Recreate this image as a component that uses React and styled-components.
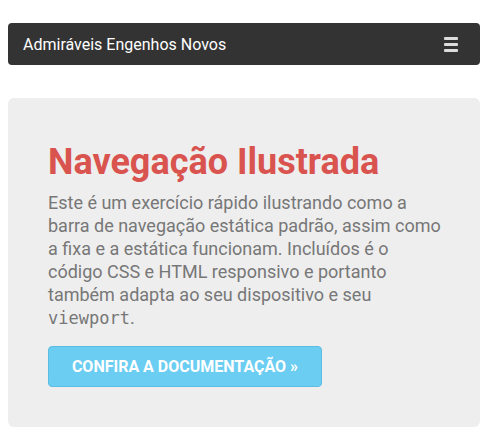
import React from "react";
import styled, { createGlobalStyle } from "styled-components";

const GlobalStyle = createGlobalStyle`
  body {
    margin: 0;
    background: #fff;
    font-family: Roboto, "Liberation Sans", sans-serif;
  }
`;

const Page = styled.div`
  padding: 23px 11px 0 8px;
`;

const Navbar = styled.nav`
  height: 42px;
  background: #333333;
  border-radius: 4px;
  display: flex;
  align-items: center;
  justify-content: space-between;
  padding: 0 22px 0 15px;
  box-sizing: border-box;
`;

const Brand = styled.span`
  color: #fff;
  font-size: 16px;
`;

const Toggle = styled.button`
  background: none;
  border: 0;
  padding: 0;
  display: flex;
  flex-direction: column;
  gap: 3px;
  cursor: pointer;
`;

const Bar = styled.span`
  display: block;
  width: 14px;
  height: 3px;
  border-radius: 1px;
  background: #dcdcdc;
`;

const Jumbotron = styled.section`
  margin-top: 33px;
  background: #eeeeee;
  border-radius: 6px;
  padding: 42px 35px 40px 40px;
  height: 329px;
  box-sizing: border-box;
`;

const Title = styled.h1`
  margin: 0 0 7px;
  font-size: 36px;
  line-height: 44px;
  font-weight: 700;
  color: #d9534f;
`;

const Lead = styled.p`
  margin: 0 0 17px;
  font-size: 18px;
  line-height: 23px;
  color: #777;
  code {
    font-family: "DejaVu Sans Mono", "Liberation Mono", monospace;
    font-size: 17px;
    line-height: 1;
    color: #777;
  }
`;

const Button = styled.a`
  display: inline-flex;
  align-items: center;
  justify-content: center;
  width: 274px;
  height: 41px;
  box-sizing: border-box;
  background: #6bcdf2;
  border: 1px solid #5bbde2;
  border-radius: 4px;
  color: #fff;
  font-weight: 700;
  font-size: 16px;
  text-transform: uppercase;
  text-decoration: none;
`;

export default function App() {
  return (
    <>
      <GlobalStyle />
      <Page>
        <Navbar>
          <Brand>Admiráveis Engenhos Novos</Brand>
          <Toggle aria-label="menu">
            <Bar />
            <Bar />
            <Bar />
          </Toggle>
        </Navbar>
        <Jumbotron>
          <Title>Navegação Ilustrada</Title>
          <Lead>
            Este é um exercício rápido ilustrando como a barra de navegação
            estática padrão, assim como a fixa e a estática funcionam.
            Incluídos é o código CSS e HTML responsivo e portanto também adapta
            ao seu dispositivo e seu <code>viewport</code>.
          </Lead>
          <Button href="#">Confira a documentação »</Button>
        </Jumbotron>
      </Page>
    </>
  );
}
